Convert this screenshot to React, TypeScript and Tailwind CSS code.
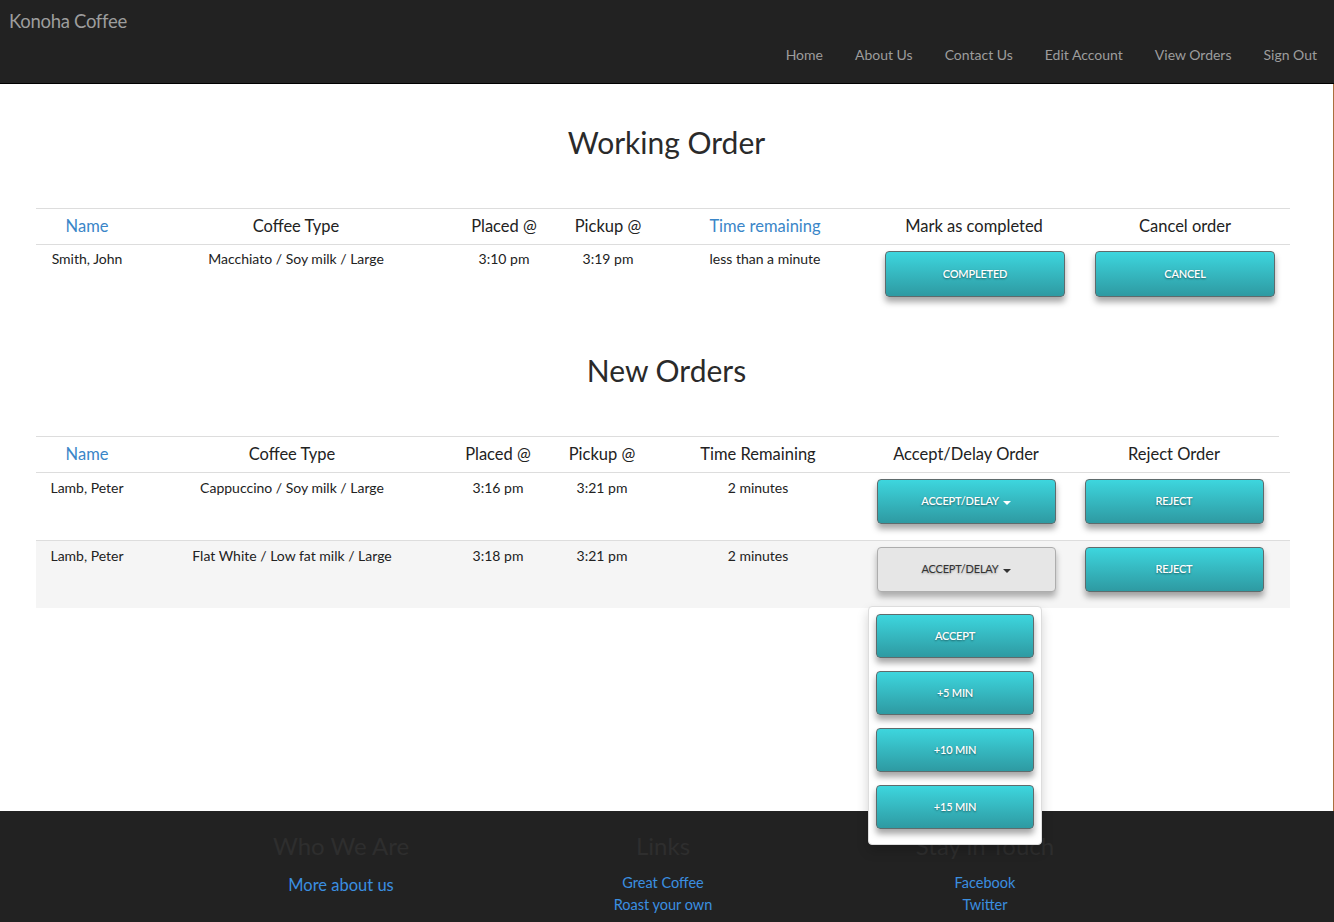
import React from "react";

const font = { fontFamily: "Lato, 'Noto Sans', sans-serif" };

function TealButton({ label, caret = false, className = "" }: { label: string; caret?: boolean; className?: string }) {
  return (
    <div
      className={`flex items-center justify-center rounded-[4px] border border-[#5f6b6c] bg-gradient-to-b from-[#3dd6de] to-[#2e9aa2] text-[11px] font-semibold uppercase tracking-[-0.2px] text-white shadow-[0_5px_6px_rgba(0,0,0,0.35)] [text-shadow:0_1px_2px_rgba(0,0,0,0.45)] ${className}`}
    >
      {label}
      {caret && <span className="ml-1 mt-[2px] inline-block h-0 w-0 border-x-[4px] border-t-[4px] border-x-transparent border-t-white" />}
    </div>
  );
}

function GrayButton({ label }: { label: string }) {
  return (
    <div className="flex h-[45px] w-[179px] items-center justify-center rounded-[4px] border border-[#adadad] bg-[#e6e6e6] text-[11px] uppercase tracking-[-0.2px] text-[#333] shadow-[0_5px_6px_rgba(0,0,0,0.3)] [text-shadow:0_1px_2px_rgba(0,0,0,0.3)]">
      {label}
      <span className="ml-1 mt-[2px] inline-block h-0 w-0 border-x-[4px] border-t-[4px] border-x-transparent border-t-[#333]" />
    </div>
  );
}

const cols1 = "grid-cols-[102px_316px_100px_108px_206px_212px_210px]";
const cols2 = "grid-cols-[102px_308px_104px_104px_208px_208px_208px_12px]";

export default function App() {
  return (
    <div className="min-h-[922px] w-[1334px] bg-white" style={font}>
      {/* Navbar */}
      <div className="h-[84px] border-b border-black bg-[#222] text-[#9d9d9d]">
        <div className="pl-[9px] pt-[8px] text-[18.5px] leading-[26px] tracking-[-0.3px]">Konoha Coffee</div>
        <div className="mt-[8px] flex justify-end pr-[17px] text-[14px] leading-[26px]">
          {["Home", "About Us", "Contact Us", "Edit Account", "View Orders", "Sign Out"].map((l, i) => (
            <span key={l} className={i === 0 ? "" : "ml-[32px]"}>{l}</span>
          ))}
        </div>
      </div>

      {/* Main */}
      <div className="relative h-[727px] border-r border-[#a8703f] text-[#222]">
        <h1 className="pt-[40px] text-center text-[30px] leading-[36px] text-[#2a2a2a]">Working Order</h1>

        <div className="ml-[36px] mt-[48px] w-[1254px]">
          <div className={`grid ${cols1} h-[37px] items-center border-y border-[#ddd] text-center text-[16.5px]`}>
            <div className="text-[#3a86c8]">Name</div>
            <div>Coffee Type</div>
            <div>Placed @</div>
            <div>Pickup @</div>
            <div className="text-[#3a86c8]">Time remaining</div>
            <div>Mark as completed</div>
            <div>Cancel order</div>
          </div>
          <div className={`grid ${cols1} h-[66px] text-center text-[14px]`}>
            <div className="pt-[3px]">Smith, John</div>
            <div className="pt-[3px]">Macchiato / Soy milk / Large</div>
            <div className="pt-[3px]">3:10 pm</div>
            <div className="pt-[3px]">3:19 pm</div>
            <div className="pt-[3px]">less than a minute</div>
            <div className="flex justify-end pr-[15px] pt-[6px]">
              <TealButton label="Completed" className="h-[46px] w-[180px]" />
            </div>
            <div className="flex justify-end pr-[15px] pt-[6px]">
              <TealButton label="Cancel" className="h-[46px] w-[180px]" />
            </div>
          </div>
        </div>

        <h1 className="mt-[41px] text-center text-[30px] leading-[36px] text-[#2a2a2a]">New Orders</h1>

        <div className="ml-[36px] mt-[48px] w-[1254px]">
          <div className={`grid ${cols2} h-[37px] items-center border-b border-[#ddd] text-center text-[16.5px]`}>
            <div className="text-[#3a86c8]">Name</div>
            <div>Coffee Type</div>
            <div>Placed @</div>
            <div>Pickup @</div>
            <div>Time Remaining</div>
            <div>Accept/Delay Order</div>
            <div>Reject Order</div>
            <div />
          </div>
          <div className="-mt-[37px] h-0 w-[1243px] border-t border-[#ddd]" />
          <div className="h-[36px]" />
          <div className={`grid ${cols2} h-[68px] border-b border-[#ddd] text-center text-[14px]`}>
            <div className="pt-[4px]">Lamb, Peter</div>
            <div className="pt-[4px]">Cappuccino / Soy milk / Large</div>
            <div className="pt-[4px]">3:16 pm</div>
            <div className="pt-[4px]">3:21 pm</div>
            <div className="pt-[4px]">2 minutes</div>
            <div className="flex justify-center pt-[6px]">
              <TealButton label="Accept/Delay" caret className="h-[45px] w-[179px]" />
            </div>
            <div className="flex justify-center pt-[6px]">
              <TealButton label="Reject" className="h-[45px] w-[179px]" />
            </div>
            <div />
          </div>
          <div className={`grid ${cols2} h-[67px] bg-[#f5f5f5] text-center text-[14px]`}>
            <div className="pt-[4px]">Lamb, Peter</div>
            <div className="pt-[4px]">Flat White / Low fat milk / Large</div>
            <div className="pt-[4px]">3:18 pm</div>
            <div className="pt-[4px]">3:21 pm</div>
            <div className="pt-[4px]">2 minutes</div>
            <div className="relative flex justify-center pt-[6px]">
              <GrayButton label="Accept/Delay" />
              <div className="absolute left-[6px] top-[65px] z-10 flex w-[174px] flex-col gap-[13px] rounded-[4px] border border-[#ddd] bg-white px-[7px] pb-[15px] pt-[7px] shadow-[0_6px_12px_rgba(0,0,0,0.18)]">
                {["Accept", "+5 min", "+10 min", "+15 min"].map((l) => (
                  <TealButton key={l} label={l} className="h-[44px] w-[158px]" />
                ))}
              </div>
            </div>
            <div className="flex justify-center pt-[6px]">
              <TealButton label="Reject" className="h-[45px] w-[179px]" />
            </div>
            <div />
          </div>
        </div>
      </div>

      {/* Footer */}
      <div className="h-[111px] bg-[#222]">
        <div className="ml-[180px] grid w-[966px] grid-cols-3 text-center">
          <div>
            <div className="pt-[18px] text-[24px] leading-[34px] text-[#2e2e2e]">Who We Are</div>
            <div className="mt-[11px] text-[16.5px] leading-[22px] text-[#3b8fe0]">More about us</div>
          </div>
          <div>
            <div className="pt-[18px] text-[24px] leading-[34px] text-[#2e2e2e]">Links</div>
            <div className="mt-[9px] text-[14.5px] leading-[22px] text-[#3b8fe0]">Great Coffee</div>
            <div className="text-[14.5px] leading-[21px] text-[#3b8fe0]">Roast your own</div>
          </div>
          <div>
            <div className="pt-[18px] text-[24px] leading-[34px] text-[#2e2e2e]">Stay in Touch</div>
            <div className="mt-[9px] text-[14.5px] leading-[22px] text-[#3b8fe0]">Facebook</div>
            <div className="text-[14.5px] leading-[21px] text-[#3b8fe0]">Twitter</div>
          </div>
        </div>
      </div>
    </div>
  );
}
